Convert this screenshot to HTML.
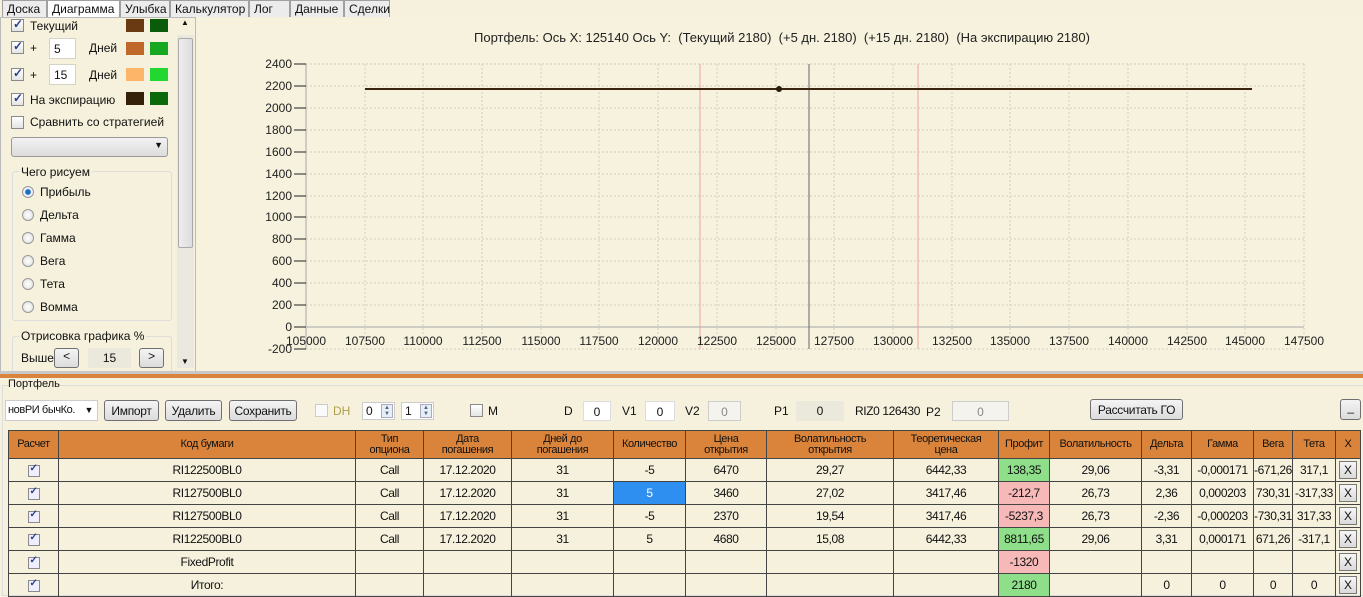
<!DOCTYPE html>
<html><head><meta charset="utf-8"><style>
*{box-sizing:border-box;margin:0;padding:0}
body{width:1363px;height:596px;overflow:hidden;background:#f5f1dc;font-family:"Liberation Sans",sans-serif;font-size:12px;color:#111;position:relative}
.a{position:absolute;white-space:nowrap}
.tab{position:absolute;top:0;height:17px;border:1px solid #a0a0a0;border-bottom:none;background:#ececec;font-size:12px;padding:1px 4px 0}
.cb{position:absolute;width:13px;height:13px;border:1px solid #8a8a8a;background:linear-gradient(#fff,#e4e4e4)}
.cb.c::after{content:"✓";position:absolute;left:1px;top:-3px;font-size:12px;color:#2a3f8a;font-weight:bold}
.sw{position:absolute;width:18px;height:13px}
.inp{position:absolute;background:#fff;border:1px solid #d6d2c4;height:21px;padding:3px 4px}
.rb{position:absolute;width:12px;height:12px;border-radius:50%;border:1px solid #999;background:radial-gradient(#fff,#ddd)}
.btn{position:absolute;border:1px solid #707070;border-radius:3px;background:linear-gradient(#f4f4f4,#dcdcdc);text-align:center;font-size:12px;letter-spacing:-0.3px}
.sp{position:absolute;right:1px;top:1px;width:12px;height:14px;border:1px solid #aab;background:#e8eef6;font-size:6px;line-height:6px;text-align:center;color:#468}
table{position:absolute;left:8px;top:430px;border-collapse:collapse;table-layout:fixed;width:1352px}
td{border:1px solid #444;height:23px;text-align:center;font-size:12px;letter-spacing:-0.4px;padding:0;overflow:hidden;white-space:nowrap}
tr.h td{background:#d9843a;height:28px;font-size:11px;line-height:11px;color:#111}
.g{background:#8fdf8a}.p{background:#f7b8b8}.s{background:#2f8ff0;color:#fff}
.x{display:inline-block;width:18px;height:18px;border:1px solid #777;background:linear-gradient(#f6f6f6,#dadada);line-height:16px;font-size:12px;letter-spacing:0}
.tk{display:inline-block;width:12px;height:12px;border:1px solid #8a8a8a;background:#eef;position:relative;vertical-align:middle}
.tk::after{content:"✓";position:absolute;left:1px;top:-3px;font-size:10px;color:#2a3f8a;font-weight:bold}
</style></head><body>
<div class="a" style="left:0;top:0;width:1363px;height:17px;background:#f5f1dc"></div>
<div class="tab" style="left:2px;width:45px">Доска</div>
<div class="tab" style="left:47px;width:73px;background:#fff;height:19px">Диаграмма</div>
<div class="tab" style="left:120px;width:50px">Улыбка</div>
<div class="tab" style="left:170px;width:79px">Калькулятор</div>
<div class="tab" style="left:249px;width:41px">Лог</div>
<div class="tab" style="left:290px;width:54px">Данные</div>
<div class="tab" style="left:344px;width:46px">Сделки</div>
<div class="a" style="left:0;top:17px;width:196px;height:355px;border:1px solid #bbb;background:#f5f1dc"></div>
<div class="cb c" style="left:11px;top:19px"></div><div class="a" style="left:30px;top:19px">Текущий</div>
<div class="sw" style="left:126px;top:19px;background:#6a3a12"></div><div class="sw" style="left:150px;top:19px;background:#0a5c0a"></div>
<div class="cb c" style="left:11px;top:41px"></div><div class="a" style="left:30px;top:41px">+</div>
<div class="inp" style="left:49px;top:38px;width:27px">5</div><div class="a" style="left:89px;top:41px">Дней</div>
<div class="sw" style="left:126px;top:42px;background:#c0682a"></div><div class="sw" style="left:150px;top:42px;background:#15a820"></div>
<div class="cb c" style="left:11px;top:68px"></div><div class="a" style="left:30px;top:68px">+</div>
<div class="inp" style="left:49px;top:64px;width:27px">15</div><div class="a" style="left:89px;top:68px">Дней</div>
<div class="sw" style="left:126px;top:68px;background:#fdb56a"></div><div class="sw" style="left:150px;top:68px;background:#22d830"></div>
<div class="cb c" style="left:11px;top:93px"></div><div class="a" style="left:30px;top:93px">На экспирацию</div>
<div class="sw" style="left:126px;top:92px;background:#35200a"></div><div class="sw" style="left:150px;top:92px;background:#0a6a0a"></div>
<div class="cb" style="left:11px;top:116px"></div><div class="a" style="left:30px;top:115px">Сравнить со стратегией</div>
<div class="a" style="left:11px;top:137px;width:157px;height:20px;border:1px solid #999;border-radius:3px;background:linear-gradient(#f2f2f2,#dcdcdc)"><span style="position:absolute;right:4px;top:2px;font-size:9px">▼</span></div>
<div class="a" style="left:12px;top:171px;width:160px;height:150px;border:1px solid #ddd;border-radius:3px"></div>
<div class="a" style="left:19px;top:165px;background:#f5f1dc;padding:0 2px">Чего рисуем</div>
<div class="rb" style="left:22px;top:186px;background:radial-gradient(#1a6fc0 35%,#eef 45%)"></div><div class="a" style="left:40px;top:185px">Прибыль</div>
<div class="rb" style="left:22px;top:209px"></div><div class="a" style="left:40px;top:208px">Дельта</div>
<div class="rb" style="left:22px;top:232px"></div><div class="a" style="left:40px;top:231px">Гамма</div>
<div class="rb" style="left:22px;top:255px"></div><div class="a" style="left:40px;top:254px">Вега</div>
<div class="rb" style="left:22px;top:278px"></div><div class="a" style="left:40px;top:277px">Тета</div>
<div class="rb" style="left:22px;top:301px"></div><div class="a" style="left:40px;top:300px">Вомма</div>
<div class="a" style="left:12px;top:336px;width:160px;height:40px;border:1px solid #ddd;border-radius:3px"></div>
<div class="a" style="left:19px;top:329px;background:#f5f1dc;padding:0 2px">Отрисовка графика %</div>
<div class="a" style="left:21px;top:351px">Выше</div>
<div class="btn" style="left:54px;top:348px;width:25px;height:20px">&lt;</div>
<div class="a" style="left:88px;top:348px;width:43px;height:20px;background:#ebe8dc;text-align:center;padding-top:3px">15</div>
<div class="btn" style="left:139px;top:348px;width:25px;height:20px">&gt;</div>
<div class="a" style="left:177px;top:35px;width:17px;height:333px;background:#ebe8e0"></div>
<div class="a" style="left:178px;top:38px;width:15px;height:210px;border:1px solid #aaa;border-radius:2px;background:linear-gradient(90deg,#eee,#ddd)"></div>
<div class="a" style="left:181px;top:18px;font-size:8px">▲</div><div class="a" style="left:181px;top:357px;font-size:8px">▼</div>
<svg class="a" style="left:0;top:0" width="1363" height="372" font-family="Liberation Sans" font-size="12">
<rect x="197" y="18" width="1166" height="353" fill="#f6f2dd"/>
<text x="782" y="42" text-anchor="middle" font-size="13" fill="#222" xml:space="preserve" style="white-space:pre">Портфель: Ось X: 125140 Ось Y:  (Текущий 2180)  (+5 дн. 2180)  (+15 дн. 2180)  (На экспирацию 2180)</text>
<g stroke="#d2cfc4" stroke-dasharray="2,2" stroke-width="1">
<line x1="306" y1="64" x2="1304" y2="64"/><line x1="306" y1="86" x2="1304" y2="86"/><line x1="306" y1="108" x2="1304" y2="108"/><line x1="306" y1="130" x2="1304" y2="130"/><line x1="306" y1="152" x2="1304" y2="152"/><line x1="306" y1="174" x2="1304" y2="174"/><line x1="306" y1="196" x2="1304" y2="196"/><line x1="306" y1="217" x2="1304" y2="217"/><line x1="306" y1="239" x2="1304" y2="239"/><line x1="306" y1="261" x2="1304" y2="261"/><line x1="306" y1="283" x2="1304" y2="283"/><line x1="306" y1="305" x2="1304" y2="305"/><line x1="306" y1="349" x2="1304" y2="349"/>
<line x1="365" y1="64" x2="365" y2="349"/><line x1="423" y1="64" x2="423" y2="349"/><line x1="482" y1="64" x2="482" y2="349"/><line x1="541" y1="64" x2="541" y2="349"/><line x1="599" y1="64" x2="599" y2="349"/><line x1="658" y1="64" x2="658" y2="349"/><line x1="717" y1="64" x2="717" y2="349"/><line x1="776" y1="64" x2="776" y2="349"/><line x1="834" y1="64" x2="834" y2="349"/><line x1="893" y1="64" x2="893" y2="349"/><line x1="952" y1="64" x2="952" y2="349"/><line x1="1010" y1="64" x2="1010" y2="349"/><line x1="1069" y1="64" x2="1069" y2="349"/><line x1="1128" y1="64" x2="1128" y2="349"/><line x1="1187" y1="64" x2="1187" y2="349"/><line x1="1245" y1="64" x2="1245" y2="349"/><line x1="1304" y1="64" x2="1304" y2="349"/>
</g>
<line x1="306" y1="327" x2="1304" y2="327" stroke="#cfccc4" stroke-width="2"/>
<line x1="306" y1="64" x2="306" y2="349" stroke="#cfccc4" stroke-width="2"/>
<line x1="700" y1="64" x2="700" y2="349" stroke="#f2a0a0"/>
<line x1="918" y1="64" x2="918" y2="349" stroke="#f2a0a0"/>
<line x1="809" y1="64" x2="809" y2="349" stroke="#666"/>
<line x1="365" y1="89" x2="1252" y2="89" stroke="#3a2410" stroke-width="2"/>
<circle cx="779" cy="89" r="3" fill="#2a1a0a"/>
<g stroke="#222"><line x1="294" y1="64" x2="306" y2="64"/><line x1="294" y1="86" x2="306" y2="86"/><line x1="294" y1="108" x2="306" y2="108"/><line x1="294" y1="130" x2="306" y2="130"/><line x1="294" y1="152" x2="306" y2="152"/><line x1="294" y1="174" x2="306" y2="174"/><line x1="294" y1="196" x2="306" y2="196"/><line x1="294" y1="217" x2="306" y2="217"/><line x1="294" y1="239" x2="306" y2="239"/><line x1="294" y1="261" x2="306" y2="261"/><line x1="294" y1="283" x2="306" y2="283"/><line x1="294" y1="305" x2="306" y2="305"/><line x1="294" y1="327" x2="306" y2="327"/><line x1="294" y1="349" x2="306" y2="349"/></g>
<g text-anchor="end" fill="#222"><text x="292" y="68">2400</text><text x="292" y="90">2200</text><text x="292" y="112">2000</text><text x="292" y="134">1800</text><text x="292" y="156">1600</text><text x="292" y="178">1400</text><text x="292" y="200">1200</text><text x="292" y="221">1000</text><text x="292" y="243">800</text><text x="292" y="265">600</text><text x="292" y="287">400</text><text x="292" y="309">200</text><text x="292" y="331">0</text><text x="292" y="353">-200</text></g>
<g text-anchor="middle" fill="#222"><text x="306" y="345">105000</text><text x="365" y="345">107500</text><text x="423" y="345">110000</text><text x="482" y="345">112500</text><text x="541" y="345">115000</text><text x="599" y="345">117500</text><text x="658" y="345">120000</text><text x="717" y="345">122500</text><text x="776" y="345">125000</text><text x="834" y="345">127500</text><text x="893" y="345">130000</text><text x="952" y="345">132500</text><text x="1010" y="345">135000</text><text x="1069" y="345">137500</text><text x="1128" y="345">140000</text><text x="1187" y="345">142500</text><text x="1245" y="345">145000</text><text x="1304" y="345">147500</text></g>
</svg>
<div class="a" style="left:0;top:371px;width:1363px;height:3px;background:#c8c8c8"></div>
<div class="a" style="left:0;top:374px;width:1363px;height:4px;background:#d9843a"></div>
<div class="a" style="left:2px;top:385px;width:1361px;height:211px;border:1px solid #ddd;border-right:none"></div>
<div class="a" style="left:8px;top:378px;background:#f5f1dc;font-size:11px">Портфель</div>
<div class="a" style="left:5px;top:400px;width:93px;height:21px;background:#fff;border:1px solid #ccc;padding:3px 2px;font-size:11px;letter-spacing:-0.4px">новРИ бычКо.<span style="position:absolute;right:4px;top:4px;font-size:9px">▼</span></div>
<div class="btn" style="left:104px;top:400px;width:55px;height:21px;padding-top:3px">Импорт</div>
<div class="btn" style="left:165px;top:400px;width:57px;height:21px;padding-top:3px">Удалить</div>
<div class="btn" style="left:229px;top:400px;width:68px;height:21px;padding-top:3px">Сохранить</div>
<div class="cb" style="left:315px;top:404px;border-color:#ccc;background:#fafafa"></div><div class="a" style="left:333px;top:404px;color:#b0a050">DH</div>
<div class="a" style="left:362px;top:402px;width:33px;height:18px;background:#fff;border:1px solid #ccc;padding:1px 3px">0<div class="sp">▲<br>▼</div></div>
<div class="a" style="left:401px;top:402px;width:33px;height:18px;background:#fff;border:1px solid #ccc;padding:1px 3px">1<div class="sp">▲<br>▼</div></div>
<div class="cb" style="left:470px;top:404px"></div><div class="a" style="left:488px;top:404px">M</div>
<div class="a" style="left:564px;top:404px">D</div><div class="a" style="left:583px;top:401px;width:28px;height:20px;background:#fff;border:1px solid #ddd;text-align:center;padding-top:3px">0</div>
<div class="a" style="left:622px;top:404px">V1</div><div class="a" style="left:645px;top:401px;width:30px;height:20px;background:#fff;border:1px solid #ddd;text-align:center;padding-top:3px">0</div>
<div class="a" style="left:685px;top:404px">V2</div><div class="a" style="left:708px;top:401px;width:33px;height:20px;background:#f5f3ee;border:1px solid #ccc;text-align:center;padding-top:3px;color:#888">0</div>
<div class="a" style="left:774px;top:404px">P1</div><div class="a" style="left:796px;top:401px;width:48px;height:20px;background:#ebe8dc;text-align:center;padding-top:3px">0</div>
<div class="a" style="left:855px;top:404px;letter-spacing:-0.4px">RIZ0 126430</div><div class="a" style="left:926px;top:405px">P2</div>
<div class="a" style="left:952px;top:401px;width:57px;height:20px;background:#f5f3ee;border:1px solid #ccc;text-align:center;padding-top:3px;color:#888">0</div>
<div class="btn" style="left:1090px;top:399px;width:93px;height:21px;padding-top:3px">Рассчитать ГО</div>
<div class="btn" style="left:1340px;top:399px;width:21px;height:21px">_</div>
<table>
<colgroup><col style="width:50px"><col style="width:297px"><col style="width:68px"><col style="width:88px"><col style="width:102px"><col style="width:72px"><col style="width:81px"><col style="width:127px"><col style="width:105px"><col style="width:51px"><col style="width:92px"><col style="width:50px"><col style="width:62px"><col style="width:39px"><col style="width:43px"><col style="width:25px"></colgroup>
<tr class="h"><td>Расчет</td><td>Код бумаги</td><td>Тип<br>опциона</td><td>Дата<br>погашения</td><td>Дней до<br>погашения</td><td>Количество</td><td>Цена<br>открытия</td><td>Волатильность<br>открытия</td><td>Теоретическая<br>цена</td><td>Профит</td><td>Волатильность</td><td>Дельта</td><td>Гамма</td><td>Вега</td><td>Тета</td><td>X</td></tr>
<tr><td><span class="tk"></span></td><td>RI122500BL0</td><td>Call</td><td>17.12.2020</td><td>31</td><td>-5</td><td>6470</td><td>29,27</td><td>6442,33</td><td class="g">138,35</td><td>29,06</td><td>-3,31</td><td>-0,000171</td><td>-671,26</td><td>317,1</td><td><span class="x">X</span></td></tr>
<tr><td><span class="tk"></span></td><td>RI127500BL0</td><td>Call</td><td>17.12.2020</td><td>31</td><td class="s">5</td><td>3460</td><td>27,02</td><td>3417,46</td><td class="p">-212,7</td><td>26,73</td><td>2,36</td><td>0,000203</td><td>730,31</td><td>-317,33</td><td><span class="x">X</span></td></tr>
<tr><td><span class="tk"></span></td><td>RI127500BL0</td><td>Call</td><td>17.12.2020</td><td>31</td><td>-5</td><td>2370</td><td>19,54</td><td>3417,46</td><td class="p">-5237,3</td><td>26,73</td><td>-2,36</td><td>-0,000203</td><td>-730,31</td><td>317,33</td><td><span class="x">X</span></td></tr>
<tr><td><span class="tk"></span></td><td>RI122500BL0</td><td>Call</td><td>17.12.2020</td><td>31</td><td>5</td><td>4680</td><td>15,08</td><td>6442,33</td><td class="g">8811,65</td><td>29,06</td><td>3,31</td><td>0,000171</td><td>671,26</td><td>-317,1</td><td><span class="x">X</span></td></tr>
<tr><td><span class="tk"></span></td><td>FixedProfit</td><td></td><td></td><td></td><td></td><td></td><td></td><td></td><td class="p">-1320</td><td></td><td></td><td></td><td></td><td></td><td><span class="x">X</span></td></tr>
<tr><td><span class="tk"></span></td><td>Итого:</td><td></td><td></td><td></td><td></td><td></td><td></td><td></td><td class="g">2180</td><td></td><td>0</td><td>0</td><td>0</td><td>0</td><td><span class="x">X</span></td></tr>
</table>
</body></html>
